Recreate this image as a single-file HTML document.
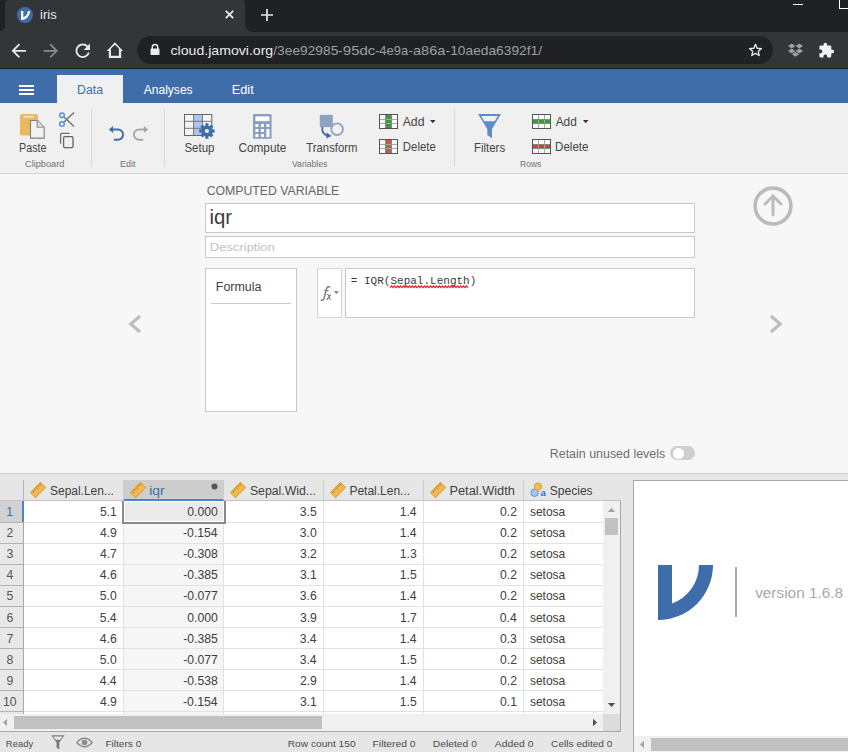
<!DOCTYPE html>
<html><head><meta charset="utf-8">
<style>
*{margin:0;padding:0;box-sizing:border-box}
html,body{width:848px;height:752px;overflow:hidden;background:#e6e6e6;font-family:"Liberation Sans",sans-serif;position:relative}
.a{position:absolute}
.t{position:absolute;white-space:nowrap;line-height:1}
svg{position:absolute;overflow:visible}
</style></head><body>

<!-- ===== Chrome tab strip ===== -->
<div class="a" style="left:0;top:0;width:848px;height:32px;background:#202124"></div>
<div class="a" style="left:5px;top:0;width:240px;height:32px;background:#323639;border-radius:4px 4px 0 0"></div>
<!-- flares -->
<div class="a" style="left:0;top:24px;width:5px;height:8px;background:#323639"></div>
<div class="a" style="left:-3px;top:0;width:8px;height:31px;background:#202124;border-radius:0 0 5px 0"></div>
<div class="a" style="left:245px;top:24px;width:8px;height:8px;background:#323639"></div>
<div class="a" style="left:245px;top:0;width:60px;height:32px;background:#202124;border-radius:0 0 0 8px"></div>
<!-- favicon -->
<svg style="left:17px;top:7px" width="16" height="16" viewBox="0 0 16 16"><circle cx="8" cy="8" r="8" fill="#3e6da9"/><path transform="translate(4 4) scale(0.165)" d="M0 0 H14 V38.5 A41 41 0 0 0 41 0 H55 A55 55 0 0 1 0 55 Z" fill="#fff"/></svg>
<svg style="left:224.6px;top:10.4px" width="9" height="9" viewBox="0 0 9 9"><path d="M0.8 0.8 L8.2 8.2 M8.2 0.8 L0.8 8.2" stroke="#e8eaed" stroke-width="1.8"/></svg>
<svg style="left:261px;top:9px" width="12" height="12" viewBox="0 0 12 12"><path d="M6 0 V12 M0 6 H12" stroke="#e8eaed" stroke-width="1.7"/></svg>
<!-- window controls -->
<div class="a" style="left:793px;top:4px;width:10px;height:1px;background:#fff"></div>
<div class="a" style="left:839px;top:-2px;width:12px;height:11px;border:1px solid #fff"></div>

<!-- ===== Chrome toolbar ===== -->
<div class="a" style="left:0;top:32px;width:848px;height:36px;background:#323639"></div>
<div class="a" style="left:0;top:68px;width:848px;height:1px;background:#202124"></div>
<!-- back -->
<svg style="left:8.25px;top:39.5px" width="23" height="23" viewBox="0 0 24 24"><path transform="scale(0.9375)" d="M20 11H7.83l5.59-5.59L12 4l-8 8 8 8 1.41-1.41L7.83 13H20v-2z" fill="#e8eaed"/></svg>
<svg style="left:40.25px;top:39.5px" width="23" height="23" viewBox="0 0 24 24"><path transform="scale(0.9375)" d="M12 4l-1.41 1.41L16.17 11H4v2h12.17l-5.58 5.59L12 20l8-8z" fill="#8a8b8d"/></svg>
<!-- reload -->
<svg style="left:72.3px;top:39.6px" width="23" height="23" viewBox="0 0 24 24"><path transform="scale(0.9375)" d="M17.65 6.35C16.2 4.9 14.21 4 12 4c-4.42 0-7.99 3.58-7.99 8s3.57 8 7.99 8c3.73 0 6.840-2.55 7.73-6h-2.08c-.82 2.33-3.04 4-5.650 4-3.31 0-6-2.690-6-6s2.690-6 6-6c1.66 0 3.14.69 4.22 1.78L13 11h7V4l-2.35 2.35z" fill="#e8eaed"/></svg>
<!-- home -->
<svg style="left:100px;top:38px" width="28" height="24" viewBox="100 38 28 24"><path fill-rule="evenodd" d="M106.8 50.9 L114.9 42.2 L123 50.9 L121.2 50.9 L121.2 57.9 L108.8 57.9 L108.8 50.9 Z M111 48.4 L114.9 44.8 L118.9 48.4 L118.9 55.7 L111 55.7 Z" fill="#e8eaed"/></svg>
<!-- omnibox -->
<div class="a" style="left:137px;top:36px;width:636px;height:28px;background:#202124;border-radius:14px"></div>
<svg style="left:150px;top:44px" width="10" height="11" viewBox="0 0 10 11"><path d="M2.3 5 V3.3 A2.7 2.7 0 0 1 7.7 3.3 V5" stroke="#e8eaed" stroke-width="1.5" fill="none"/><rect x="0.5" y="4.6" width="9" height="6.4" rx="0.8" fill="#e8eaed"/></svg>
<!-- star -->
<svg style="left:748px;top:43px" width="15" height="14" viewBox="0 0 24 23"><path d="M12 2.2 L14.8 8.6 L21.8 9.2 L16.5 13.8 L18.1 20.6 L12 17 L5.9 20.6 L7.5 13.8 L2.2 9.2 L9.2 8.6 Z" stroke="#e8eaed" stroke-width="2.2" fill="none" stroke-linejoin="round"/></svg>
<!-- dropbox -->
<svg style="left:788px;top:43px" width="15" height="14" viewBox="0 0 15 14"><g fill="#9aa0a6"><path d="M0 3 L3.7 0.5 L7.4 3 L3.7 5.5 Z"/><path d="M7.6 3 L11.3 0.5 L15 3 L11.3 5.5 Z"/><path d="M0 8 L3.7 5.5 L7.4 8 L3.7 10.5 Z"/><path d="M7.6 8 L11.3 5.5 L15 8 L11.3 10.5 Z"/><path d="M3.8 11.2 L7.5 8.7 L11.2 11.2 L7.5 13.7 Z"/></g></svg>
<!-- puzzle -->
<svg style="left:818.2px;top:42.3px" width="24" height="24" viewBox="0 0 24 24"><path transform="scale(0.7)" d="M20.5 11H19V7c0-1.1-.9-2-2-2h-4V3.5C13 2.12 11.88 1 10.5 1S8 2.12 8 3.5V5H4c-1.1 0-1.99.9-1.99 2v3.8H3.5c1.49 0 2.7 1.21 2.7 2.7s-1.21 2.7-2.7 2.7H2V20c0 1.1.9 2 2 2h3.8v-1.5c0-1.49 1.21-2.7 2.7-2.7 1.490 0 2.7 1.21 2.7 2.7V22H17c1.1 0 2-.9 2-2v-4h1.5c1.38 0 2.5-1.12 2.5-2.5S21.88 11 20.5 11z" fill="#f1f3f4"/></svg>

<!-- ===== jamovi header ===== -->
<div class="a" style="left:0;top:69px;width:848px;height:34px;background:#3e6da9"></div>
<div class="a" style="left:19px;top:85px;width:15px;height:2px;background:#fff"></div>
<div class="a" style="left:19px;top:89px;width:15px;height:2px;background:#fff"></div>
<div class="a" style="left:19px;top:93px;width:15px;height:2px;background:#fff"></div>
<div class="a" style="left:57px;top:75px;width:66px;height:28px;background:#f0f0f0"></div>

<!-- ===== Ribbon ===== -->
<div class="a" style="left:0;top:103px;width:848px;height:71px;background:#f0f0f0;border-bottom:1px solid #d4d4d4"></div>
<!-- paste -->
<svg style="left:20px;top:114px" width="26" height="26" viewBox="0 0 26 26"><rect x="0" y="0" width="18" height="21.4" rx="1.6" fill="#e8b862"/><rect x="3.4" y="1.7" width="10.8" height="1.9" fill="#f6e3bd"/><path d="M10.5 6.5 H17.7 L24.2 13.2 V24.1 H10.5 Z" fill="#f2f2f2" stroke="#808080" stroke-width="1.1"/><path d="M17.2 6.5 V13.2 H24.2" fill="#dcdcdc" stroke="#909090" stroke-width="1.1"/></svg>
<!-- scissors -->
<svg style="left:58px;top:111px" width="18" height="17" viewBox="0 0 18 17"><path d="M6 6 L16 15.5 M6 11 L16 1.5" stroke="#707070" stroke-width="1.3"/><circle cx="4" cy="4.3" r="2.3" fill="none" stroke="#5a8fd8" stroke-width="1.5"/><circle cx="4" cy="13" r="2.3" fill="none" stroke="#5a8fd8" stroke-width="1.5"/></svg>
<!-- copy -->
<svg style="left:59px;top:132px" width="16" height="17" viewBox="0 0 16 17"><path d="M1.6 11.8 V2.3 Q1.6 1.4 2.5 1.4 H10.6" fill="none" stroke="#707070" stroke-width="1.3"/><rect x="4.6" y="4.7" width="9.4" height="10.9" rx="1" fill="none" stroke="#666" stroke-width="1.3"/></svg>
<div class="a" style="left:91px;top:109px;width:1px;height:58px;background:#d9d9d9"></div>
<!-- undo/redo -->
<svg style="left:108px;top:125px" width="42" height="17" viewBox="0 0 42 17"><path d="M4.6 4.5 H10 A5.1 5.1 0 0 1 10 14.7 H5.8" fill="none" stroke="#3e6da9" stroke-width="1.9"/><path d="M0.8 4.5 L5.1 1 V8 Z" fill="#3e6da9"/><path d="M36.4 4.5 H31 A5.1 5.1 0 0 0 31 14.7 H35.2" fill="none" stroke="#a8a8a8" stroke-width="1.9"/><path d="M40.2 4.5 L35.9 1 V8 Z" fill="#a8a8a8"/></svg>
<div class="a" style="left:164px;top:109px;width:1px;height:58px;background:#d9d9d9"></div>
<!-- setup -->
<svg style="left:184px;top:114px" width="32" height="26" viewBox="0 0 32 26"><rect x="0.5" y="0.5" width="27.3" height="21" fill="#f5f5f5" stroke="#666" stroke-width="1"/><rect x="9.6" y="1" width="8.8" height="20" fill="#a9c7f0"/><path d="M9.6 0.5 V21.5 M18.4 0.5 V21.5 M0.5 7.3 H27.8 M0.5 14.3 H27.8" stroke="#777" stroke-width="1"/><g transform="translate(22.9 17)" fill="#3e6da9"><circle r="5.5"/><rect x="-1.6" y="-7.7" width="3.2" height="15.4"/><rect x="-1.6" y="-7.7" width="3.2" height="15.4" transform="rotate(45)"/><rect x="-1.6" y="-7.7" width="3.2" height="15.4" transform="rotate(90)"/><rect x="-1.6" y="-7.7" width="3.2" height="15.4" transform="rotate(135)"/><circle r="2.1" fill="#f0f0f0"/></g></svg>
<!-- compute -->
<svg style="left:253px;top:114px" width="19" height="25" viewBox="0 0 19 25"><rect x="0" y="0" width="18.6" height="24.8" rx="1" fill="#8c9fc2"/><rect x="2.4" y="2.4" width="14" height="4.7" fill="#fff"/><g fill="#fff"><rect x="2.4" y="10" width="3" height="3"/><rect x="7.9" y="10" width="3" height="3"/><rect x="13.4" y="10" width="3" height="3"/><rect x="2.4" y="15" width="3" height="3"/><rect x="7.9" y="15" width="3" height="3"/><rect x="13.4" y="15" width="3" height="8"/><rect x="2.4" y="20" width="3" height="3"/><rect x="7.9" y="20" width="3" height="3"/></g></svg>
<!-- transform -->
<svg style="left:319px;top:114px" width="26" height="25" viewBox="0 0 26 25"><rect x="0.8" y="0.9" width="13" height="12.2" fill="#8da2c3"/><circle cx="18.1" cy="15.2" r="5.8" fill="#f0f0f0" stroke="#8da2c3" stroke-width="1.8"/><path d="M3.3 13 Q2.6 20 8.5 21.8" fill="none" stroke="#3e6da9" stroke-width="1.8"/><path d="M7.5 18.5 L12.6 21.9 L7.3 24.6 Z" fill="#3e6da9"/></svg>
<!-- add/delete variables -->
<svg style="left:379px;top:114px" width="20" height="40" viewBox="0 0 20 40"><g transform="translate(0 0)"><rect x="0.5" y="0.5" width="18" height="14" fill="#fafafa"/><rect x="6" y="0" width="7" height="15" fill="#3a9a3e"/><path d="M0.5 5.5 H18.5 M0.5 9.5 H18.5" stroke="#aaa" stroke-width="1"/><path d="M6.5 0.5 V14.5 M12.5 0.5 V14.5" stroke="#888" stroke-width="1"/><rect x="0.5" y="0.5" width="18" height="14" fill="none" stroke="#555" stroke-width="1"/></g><g transform="translate(0 25)"><rect x="0.5" y="0.5" width="18" height="14" fill="#fafafa"/><rect x="6" y="0" width="7" height="15" fill="#c9574b"/><path d="M0.5 5.5 H18.5 M0.5 9.5 H18.5" stroke="#aaa" stroke-width="1"/><path d="M6.5 0.5 V14.5 M12.5 0.5 V14.5" stroke="#888" stroke-width="1"/><rect x="0.5" y="0.5" width="18" height="14" fill="none" stroke="#555" stroke-width="1"/></g></svg>
<svg style="left:430px;top:120px" width="6" height="4" viewBox="0 0 6 4"><path d="M0 0 H5.5 L2.75 3.2 Z" fill="#333"/></svg>
<div class="a" style="left:454px;top:109px;width:1px;height:58px;background:#d9d9d9"></div>
<!-- filters -->
<svg style="left:478px;top:114px" width="24" height="25" viewBox="0 0 24 25"><path d="M0 0 H23 L14 15 V24.3 L9.3 21 V15 Z" fill="#5e8bc9"/><path d="M3.2 2 H19.8 L16.8 7.2 H6.2 Z" fill="#f0f0f0"/></svg>
<!-- add/delete rows -->
<svg style="left:532px;top:114px" width="20" height="40" viewBox="0 0 20 40"><g transform="translate(0 0)"><rect x="0.5" y="0.5" width="18" height="14" fill="#fafafa"/><rect x="0" y="5" width="19" height="5" fill="#3a9a3e"/><path d="M6.5 0.5 V14.5 M12.5 0.5 V14.5" stroke="#aaa" stroke-width="1"/><path d="M0.5 5.5 H18.5 M0.5 9.5 H18.5" stroke="#888" stroke-width="1"/><rect x="0.5" y="0.5" width="18" height="14" fill="none" stroke="#555" stroke-width="1"/></g><g transform="translate(0 25)"><rect x="0.5" y="0.5" width="18" height="14" fill="#fafafa"/><rect x="0" y="5" width="19" height="5" fill="#d83b3b"/><path d="M6.5 0.5 V14.5 M12.5 0.5 V14.5" stroke="#aaa" stroke-width="1"/><path d="M0.5 5.5 H18.5 M0.5 9.5 H18.5" stroke="#888" stroke-width="1"/><rect x="0.5" y="0.5" width="18" height="14" fill="none" stroke="#555" stroke-width="1"/></g></svg>
<svg style="left:583px;top:120px" width="6" height="4" viewBox="0 0 6 4"><path d="M0 0 H5.5 L2.75 3.2 Z" fill="#333"/></svg>

<!-- ===== Content ===== -->
<div class="a" style="left:0;top:174px;width:848px;height:300px;background:#f7f7f7;border-bottom:1px solid #cfcfcf"></div>
<div class="a" style="left:205px;top:203px;width:490px;height:30px;background:#fff;border:1px solid #c8c8c8"></div>
<div class="a" style="left:205px;top:236px;width:490px;height:22px;background:#fff;border:1px solid #c8c8c8"></div>
<!-- formula list -->
<div class="a" style="left:205px;top:268px;width:92px;height:144px;background:#fff;border:1px solid #c8c8c8"></div>
<div class="a" style="left:211px;top:303px;width:80px;height:1px;background:#c8c8c8"></div>
<!-- fx -->
<div class="a" style="left:317px;top:268px;width:25px;height:50px;background:#fff;border:1px solid #d4d4d4"></div>
<svg style="left:314px;top:276px" width="32" height="34" viewBox="314 276 32 34"><path d="M321.3 300.2 Q323.2 300.8 324 298.5 L326.6 288.6 Q327.3 286.4 329.6 286.9" fill="none" stroke="#7a7a7a" stroke-width="1.5" stroke-linecap="round"/><path d="M324.4 290.6 H328.6" stroke="#7a7a7a" stroke-width="1.2"/><path d="M327 294.6 Q328.6 294 329.2 297 Q329.8 299.8 330.9 299.4 M330.8 294.6 L326.6 299.8" fill="none" stroke="#7a7a7a" stroke-width="1.1"/><path d="M333.9 291.2 H338.9 L336.4 294 Z" fill="#777"/></svg>
<div class="a" style="left:345px;top:268px;width:350px;height:50px;background:#fff;border:1px solid #c8c8c8"></div>
<svg style="left:389.5px;top:284.5px" width="80" height="4" viewBox="0 0 80 4"><path d="M0 2.6 L0.0 2.6 L1.5 0.8 L3.0 2.6 L4.5 0.8 L6.0 2.6 L7.5 0.8 L9.0 2.6 L10.5 0.8 L12.0 2.6 L13.5 0.8 L15.0 2.6 L16.5 0.8 L18.0 2.6 L19.5 0.8 L21.0 2.6 L22.5 0.8 L24.0 2.6 L25.5 0.8 L27.0 2.6 L28.5 0.8 L30.0 2.6 L31.5 0.8 L33.0 2.6 L34.5 0.8 L36.0 2.6 L37.5 0.8 L39.0 2.6 L40.5 0.8 L42.0 2.6 L43.5 0.8 L45.0 2.6 L46.5 0.8 L48.0 2.6 L49.5 0.8 L51.0 2.6 L52.5 0.8 L54.0 2.6 L55.5 0.8 L57.0 2.6 L58.5 0.8 L60.0 2.6 L61.5 0.8 L63.0 2.6 L64.5 0.8 L66.0 2.6 L67.5 0.8 L69.0 2.6 L70.5 0.8 L72.0 2.6 L73.5 0.8 L75.0 2.6 L76.5 0.8 L78.0 2.6" fill="none" stroke="#e02020" stroke-width="1.15"/></svg>
<!-- up circle -->
<svg style="left:753px;top:186px" width="40" height="40" viewBox="0 0 40 40"><circle cx="20" cy="20" r="17.9" fill="none" stroke="#bbb" stroke-width="3.6"/><path d="M20 9.8 V29 M12 18 L20 10 L28 18" fill="none" stroke="#bbb" stroke-width="2.9" stroke-linecap="round" stroke-linejoin="round"/></svg>
<!-- chevrons -->
<svg style="left:126.5px;top:313px" width="16" height="22" viewBox="0 0 16 22"><path d="M13 3 L3.8 11 L13 19" fill="none" stroke="#bdbdbd" stroke-width="3.2"/></svg>
<svg style="left:767px;top:313px" width="16" height="22" viewBox="0 0 16 22"><path d="M4 3 L13.2 11 L4 19" fill="none" stroke="#bdbdbd" stroke-width="3.2"/></svg>
<!-- retain -->
<div class="a" style="left:670px;top:446px;width:25px;height:14px;background:#cfcfcf;border-radius:7px"></div>
<div class="a" style="left:672.5px;top:447.5px;width:11px;height:11px;background:#fff;border-radius:50%"></div>

<!-- ===== table ===== -->
<div class="a" style="left:0;top:500px;width:621px;height:232px;background:#fff;border-top:1px solid #c4c4c4;border-right:1px solid #a8a8a8;border-bottom:1px solid #a8a8a8"></div>
<div class="a" style="left:124px;top:501px;width:99px;height:213px;background:#f6f6f6"></div>
<div class="a" style="left:0;top:501px;width:23px;height:213px;background:#e8e8e8"></div>
<div class="a" style="left:0;top:501px;width:22px;height:21px;background:#d2d2d2"></div>
<div class="a" style="left:23px;top:501px;width:1px;height:213px;background:#a9a9a9"></div>
<div class="a" style="left:22px;top:501px;width:2px;height:21px;background:#4a86d0"></div>
<div class="a" style="left:123px;top:501px;width:1px;height:213px;background:#e2e2e2"></div>
<div class="a" style="left:223px;top:501px;width:1px;height:213px;background:#e2e2e2"></div>
<div class="a" style="left:323px;top:501px;width:1px;height:213px;background:#e2e2e2"></div>
<div class="a" style="left:423px;top:501px;width:1px;height:213px;background:#e2e2e2"></div>
<div class="a" style="left:523px;top:501px;width:1px;height:213px;background:#e2e2e2"></div>
<div class="a" style="left:24px;top:522px;width:579px;height:1px;background:#e2e2e2"></div>
<div class="a" style="left:0;top:522px;width:23px;height:1px;background:#b4b4b4"></div>
<div class="a" style="left:24px;top:543px;width:579px;height:1px;background:#e2e2e2"></div>
<div class="a" style="left:0;top:543px;width:23px;height:1px;background:#b4b4b4"></div>
<div class="a" style="left:24px;top:564px;width:579px;height:1px;background:#e2e2e2"></div>
<div class="a" style="left:0;top:564px;width:23px;height:1px;background:#b4b4b4"></div>
<div class="a" style="left:24px;top:585px;width:579px;height:1px;background:#e2e2e2"></div>
<div class="a" style="left:0;top:585px;width:23px;height:1px;background:#b4b4b4"></div>
<div class="a" style="left:24px;top:606px;width:579px;height:1px;background:#e2e2e2"></div>
<div class="a" style="left:0;top:606px;width:23px;height:1px;background:#b4b4b4"></div>
<div class="a" style="left:24px;top:627px;width:579px;height:1px;background:#e2e2e2"></div>
<div class="a" style="left:0;top:627px;width:23px;height:1px;background:#b4b4b4"></div>
<div class="a" style="left:24px;top:648px;width:579px;height:1px;background:#e2e2e2"></div>
<div class="a" style="left:0;top:648px;width:23px;height:1px;background:#b4b4b4"></div>
<div class="a" style="left:24px;top:669px;width:579px;height:1px;background:#e2e2e2"></div>
<div class="a" style="left:0;top:669px;width:23px;height:1px;background:#b4b4b4"></div>
<div class="a" style="left:24px;top:690px;width:579px;height:1px;background:#e2e2e2"></div>
<div class="a" style="left:0;top:690px;width:23px;height:1px;background:#b4b4b4"></div>
<div class="a" style="left:24px;top:711px;width:579px;height:1px;background:#e2e2e2"></div>
<div class="a" style="left:0;top:711px;width:23px;height:1px;background:#b4b4b4"></div>
<div class="a" style="left:122px;top:501px;width:104px;height:23px;border:2px solid #8a8a8a;border-top:0;background:#ebebeb;box-shadow:inset 0 0 0 1px #fff"></div>
<div class="a" style="left:603px;top:501px;width:17px;height:213px;background:#f0f0f0"></div>
<svg style="left:607px;top:507px" width="9" height="6" viewBox="0 0 9 6"><path d="M0.8 5 L4.5 1 L8.2 5 Z" fill="#a3a3a3"/></svg>
<div class="a" style="left:605px;top:518px;width:13px;height:17px;background:#c1c1c1"></div>
<svg style="left:607px;top:702px" width="9" height="6" viewBox="0 0 9 6"><path d="M0.8 1 L4.5 5 L8.2 1 Z" fill="#505050"/></svg>
<div class="a" style="left:0;top:714px;width:603px;height:17px;background:#f0f0f0"></div>
<div class="a" style="left:603px;top:714px;width:17px;height:17px;background:#dcdcdc"></div>
<svg style="left:2px;top:718px" width="6" height="9" viewBox="0 0 6 9"><path d="M5 0.8 L1 4.5 L5 8.2 Z" fill="#a3a3a3"/></svg>
<div class="a" style="left:14px;top:716px;width:308px;height:13px;background:#c1c1c1"></div>
<svg style="left:592px;top:718px" width="6" height="9" viewBox="0 0 6 9"><path d="M1 0.8 L5 4.5 L1 8.2 Z" fill="#505050"/></svg>
<div class="a" style="left:23px;top:480px;width:1px;height:20px;background:#b8b8b8"></div>
<div class="a" style="left:124px;top:480px;width:100px;height:20px;background:#cdcdcd"></div>
<div class="a" style="left:124px;top:499px;width:100px;height:2px;background:#4a86d0"></div>
<div class="a" style="left:123px;top:480px;width:1px;height:20px;background:#cbcbcb"></div>
<div class="a" style="left:223px;top:480px;width:1px;height:20px;background:#cbcbcb"></div>
<div class="a" style="left:323px;top:480px;width:1px;height:20px;background:#cbcbcb"></div>
<div class="a" style="left:423px;top:480px;width:1px;height:20px;background:#cbcbcb"></div>
<div class="a" style="left:523px;top:480px;width:1px;height:20px;background:#cbcbcb"></div>
<svg style="left:30px;top:482px" width="16" height="16" viewBox="0 0 16 16"><g transform="rotate(-45 8 8)"><rect x="1" y="4.5" width="14" height="7" fill="#f0b955" stroke="#e2a233" stroke-width="1"/><path d="M3.5 4.5 V7.3 M6 4.5 V6.5 M8.5 4.5 V7.3 M11 4.5 V6.5 M13.5 4.5 V7.3" stroke="#c98a1e" stroke-width="1"/></g></svg>
<svg style="left:130px;top:482px" width="16" height="16" viewBox="0 0 16 16"><g transform="rotate(-45 8 8)"><rect x="1" y="4.5" width="14" height="7" fill="#f0b955" stroke="#e2a233" stroke-width="1"/><path d="M3.5 4.5 V7.3 M6 4.5 V6.5 M8.5 4.5 V7.3 M11 4.5 V6.5 M13.5 4.5 V7.3" stroke="#c98a1e" stroke-width="1"/></g></svg>
<svg style="left:230px;top:482px" width="16" height="16" viewBox="0 0 16 16"><g transform="rotate(-45 8 8)"><rect x="1" y="4.5" width="14" height="7" fill="#f0b955" stroke="#e2a233" stroke-width="1"/><path d="M3.5 4.5 V7.3 M6 4.5 V6.5 M8.5 4.5 V7.3 M11 4.5 V6.5 M13.5 4.5 V7.3" stroke="#c98a1e" stroke-width="1"/></g></svg>
<svg style="left:330px;top:482px" width="16" height="16" viewBox="0 0 16 16"><g transform="rotate(-45 8 8)"><rect x="1" y="4.5" width="14" height="7" fill="#f0b955" stroke="#e2a233" stroke-width="1"/><path d="M3.5 4.5 V7.3 M6 4.5 V6.5 M8.5 4.5 V7.3 M11 4.5 V6.5 M13.5 4.5 V7.3" stroke="#c98a1e" stroke-width="1"/></g></svg>
<svg style="left:430px;top:482px" width="16" height="16" viewBox="0 0 16 16"><g transform="rotate(-45 8 8)"><rect x="1" y="4.5" width="14" height="7" fill="#f0b955" stroke="#e2a233" stroke-width="1"/><path d="M3.5 4.5 V7.3 M6 4.5 V6.5 M8.5 4.5 V7.3 M11 4.5 V6.5 M13.5 4.5 V7.3" stroke="#c98a1e" stroke-width="1"/></g></svg>
<svg style="left:211px;top:483px" width="7" height="7" viewBox="0 0 7 7"><circle cx="3.5" cy="3.5" r="3" fill="#555"/></svg>
<svg style="left:530px;top:481px" width="17" height="17" viewBox="0 0 17 17"><circle cx="4.6" cy="11.7" r="3.7" fill="#a9c7f0" stroke="#5a8fd8" stroke-width="1"/><circle cx="8" cy="5.7" r="3.7" fill="#f0bd5e" stroke="#e0a030" stroke-width="1"/><text x="10.4" y="15.1" font-family="Liberation Sans" font-weight="bold" font-size="9.6" fill="#2f6fd0">a</text></svg>
<!-- ===== results ===== -->
<div class="a" style="left:633px;top:480px;width:220px;height:280px;background:#fff;border:1px solid #a8a8a8"></div>
<div class="a" style="left:634px;top:736px;width:214px;height:16px;background:#f1f1f1"></div>
<svg style="left:639px;top:740px" width="6" height="9" viewBox="0 0 6 9"><path d="M5 0.8 L1 4.5 L5 8.2 Z" fill="#a3a3a3"/></svg>
<div class="a" style="left:651px;top:738px;width:197px;height:13px;background:#c1c1c1"></div>
<svg style="left:658px;top:565px" width="56" height="56" viewBox="658 565 56 56"><path d="M658 565 H672 V603.5 A41 41 0 0 0 699 565 H713 A55 55 0 0 1 658 620 Z" fill="#3e6da9"/></svg>
<div class="a" style="left:735px;top:567px;width:2px;height:50px;background:#aaa"></div>
<!-- ===== status ===== -->
<svg style="left:51px;top:735px" width="14" height="15" viewBox="0 0 14 15"><path d="M0.3 0.3 H13.5 L8.3 7.5 V14.6 L5.5 12.6 V7.5 Z" fill="#7a7a7a"/><path d="M2.3 1.6 H11.5 L9.2 4.8 H4.6 Z" fill="#e6e6e6"/></svg>
<svg style="left:76px;top:737px" width="17" height="11" viewBox="0 0 17 11"><path d="M0.8 5.5 Q8.5 -3 16.2 5.5 Q8.5 14 0.8 5.5 Z" fill="none" stroke="#8a8a8a" stroke-width="1.3"/><circle cx="8.5" cy="5.5" r="2.8" fill="#8a8a8a"/></svg>
<svg style="left:0;top:0" width="848" height="752" viewBox="0 0 848 752">
<text x="40.14" y="19.00" font-size="12" font-family="Liberation Sans" fill="#e8eaed" textLength="16.52" lengthAdjust="spacingAndGlyphs">iris</text>
<text x="170.50" y="54.60" font-size="13" font-family="Liberation Sans" fill="#e8eaed" textLength="102.72" lengthAdjust="spacingAndGlyphs">cloud.jamovi.org</text>
<text x="273.30" y="54.60" font-size="13" font-family="Liberation Sans" fill="#9aa0a6" textLength="64.98" lengthAdjust="spacingAndGlyphs">/3ee92985</text>
<text x="337.87" y="54.60" font-size="13" font-family="Liberation Sans" fill="#9aa0a6" textLength="37.35" lengthAdjust="spacingAndGlyphs">-95dc</text>
<text x="375.05" y="54.60" font-size="13" font-family="Liberation Sans" fill="#9aa0a6" textLength="33.15" lengthAdjust="spacingAndGlyphs">-4e9a</text>
<text x="408.18" y="54.60" font-size="13" font-family="Liberation Sans" fill="#9aa0a6" textLength="37.21" lengthAdjust="spacingAndGlyphs">-a86a</text>
<text x="445.62" y="54.60" font-size="13" font-family="Liberation Sans" fill="#9aa0a6" textLength="96.41" lengthAdjust="spacingAndGlyphs">-10aeda6392f1/</text>
<text x="77.08" y="93.80" font-size="12" font-family="Liberation Sans" fill="#3e6da9" textLength="25.87" lengthAdjust="spacingAndGlyphs">Data</text>
<text x="143.70" y="93.80" font-size="12" font-family="Liberation Sans" fill="#ffffff" textLength="48.95" lengthAdjust="spacingAndGlyphs">Analyses</text>
<text x="231.73" y="93.80" font-size="12" font-family="Liberation Sans" fill="#ffffff" textLength="22.05" lengthAdjust="spacingAndGlyphs">Edit</text>
<text x="19.12" y="151.70" font-size="12.2" font-family="Liberation Sans" fill="#444444" textLength="27.36" lengthAdjust="spacingAndGlyphs">Paste</text>
<text x="184.48" y="151.70" font-size="12.2" font-family="Liberation Sans" fill="#444444" textLength="29.97" lengthAdjust="spacingAndGlyphs">Setup</text>
<text x="238.42" y="151.70" font-size="12.2" font-family="Liberation Sans" fill="#444444" textLength="47.92" lengthAdjust="spacingAndGlyphs">Compute</text>
<text x="306.37" y="151.70" font-size="12.2" font-family="Liberation Sans" fill="#444444" textLength="51.00" lengthAdjust="spacingAndGlyphs">Transform</text>
<text x="474.06" y="151.70" font-size="12.2" font-family="Liberation Sans" fill="#444444" textLength="31.07" lengthAdjust="spacingAndGlyphs">Filters</text>
<text x="402.75" y="125.80" font-size="12.2" font-family="Liberation Sans" fill="#444444" textLength="21.66" lengthAdjust="spacingAndGlyphs">Add</text>
<text x="402.87" y="151.00" font-size="12.2" font-family="Liberation Sans" fill="#444444" textLength="32.91" lengthAdjust="spacingAndGlyphs">Delete</text>
<text x="555.65" y="125.80" font-size="12.2" font-family="Liberation Sans" fill="#444444" textLength="21.14" lengthAdjust="spacingAndGlyphs">Add</text>
<text x="555.05" y="151.00" font-size="12.2" font-family="Liberation Sans" fill="#444444" textLength="33.44" lengthAdjust="spacingAndGlyphs">Delete</text>
<text x="25.03" y="167.10" font-size="9.7" font-family="Liberation Sans" fill="#707070" textLength="39.36" lengthAdjust="spacingAndGlyphs">Clipboard</text>
<text x="120.06" y="167.10" font-size="9.7" font-family="Liberation Sans" fill="#707070" textLength="15.50" lengthAdjust="spacingAndGlyphs">Edit</text>
<text x="291.96" y="167.10" font-size="9.7" font-family="Liberation Sans" fill="#707070" textLength="35.37" lengthAdjust="spacingAndGlyphs">Variables</text>
<text x="520.10" y="167.10" font-size="9.7" font-family="Liberation Sans" fill="#707070" textLength="21.21" lengthAdjust="spacingAndGlyphs">Rows</text>
<text x="206.68" y="194.80" font-size="12.9" font-family="Liberation Sans" fill="#666666" textLength="132.63" lengthAdjust="spacingAndGlyphs">COMPUTED VARIABLE</text>
<text x="209.43" y="223.90" font-size="19.3" font-family="Liberation Sans" fill="#3a3a3a" textLength="22.64" lengthAdjust="spacingAndGlyphs">iqr</text>
<text x="209.83" y="251.40" font-size="11.5" font-family="Liberation Sans" fill="#c2c2c2" textLength="64.99" lengthAdjust="spacingAndGlyphs">Description</text>
<text x="215.81" y="291.00" font-size="12.5" font-family="Liberation Sans" fill="#404040" textLength="45.59" lengthAdjust="spacingAndGlyphs">Formula</text>
<text x="350.79" y="284.30" font-size="10.8" font-family="Liberation Mono" fill="#3a3a3a" textLength="125.54" lengthAdjust="spacingAndGlyphs">= IQR(Sepal.Length)</text>
<text x="549.76" y="457.80" font-size="12" font-family="Liberation Sans" fill="#6e6e6e" textLength="115.41" lengthAdjust="spacingAndGlyphs">Retain unused levels</text>
<text x="50.05" y="495.00" font-size="12" font-family="Liberation Sans" fill="#404040" textLength="63.75" lengthAdjust="spacingAndGlyphs">Sepal.Len...</text>
<text x="149.28" y="495.00" font-size="12" font-family="Liberation Sans" fill="#3e6da9" textLength="15.33" lengthAdjust="spacingAndGlyphs">iqr</text>
<text x="249.94" y="495.00" font-size="12" font-family="Liberation Sans" fill="#404040" textLength="66.08" lengthAdjust="spacingAndGlyphs">Sepal.Wid...</text>
<text x="349.40" y="495.00" font-size="12" font-family="Liberation Sans" fill="#404040" textLength="60.66" lengthAdjust="spacingAndGlyphs">Petal.Len...</text>
<text x="449.43" y="495.00" font-size="12" font-family="Liberation Sans" fill="#404040" textLength="65.48" lengthAdjust="spacingAndGlyphs">Petal.Width</text>
<text x="549.85" y="495.00" font-size="12" font-family="Liberation Sans" fill="#404040" textLength="42.80" lengthAdjust="spacingAndGlyphs">Species</text>
<text x="99.90" y="516.00" font-size="12.2" font-family="Liberation Sans" fill="#404040" textLength="16.96" lengthAdjust="spacingAndGlyphs">5.1</text>
<text x="187.25" y="516.00" font-size="12.2" font-family="Liberation Sans" fill="#404040" textLength="30.53" lengthAdjust="spacingAndGlyphs">0.000</text>
<text x="299.80" y="516.00" font-size="12.2" font-family="Liberation Sans" fill="#404040" textLength="16.96" lengthAdjust="spacingAndGlyphs">3.5</text>
<text x="399.65" y="516.00" font-size="12.2" font-family="Liberation Sans" fill="#404040" textLength="16.96" lengthAdjust="spacingAndGlyphs">1.4</text>
<text x="500.00" y="516.00" font-size="12.2" font-family="Liberation Sans" fill="#404040" textLength="16.96" lengthAdjust="spacingAndGlyphs">0.2</text>
<text x="529.96" y="516.00" font-size="12.2" font-family="Liberation Sans" fill="#404040" textLength="35.34" lengthAdjust="spacingAndGlyphs">setosa</text>
<text x="6.35" y="516.00" font-size="12.2" font-family="Liberation Sans" fill="#3e6da9" textLength="6.79" lengthAdjust="spacingAndGlyphs">1</text>
<text x="99.90" y="537.10" font-size="12.2" font-family="Liberation Sans" fill="#404040" textLength="16.96" lengthAdjust="spacingAndGlyphs">4.9</text>
<text x="183.05" y="537.10" font-size="12.2" font-family="Liberation Sans" fill="#404040" textLength="34.59" lengthAdjust="spacingAndGlyphs">-0.154</text>
<text x="299.80" y="537.10" font-size="12.2" font-family="Liberation Sans" fill="#404040" textLength="16.96" lengthAdjust="spacingAndGlyphs">3.0</text>
<text x="399.65" y="537.10" font-size="12.2" font-family="Liberation Sans" fill="#404040" textLength="16.96" lengthAdjust="spacingAndGlyphs">1.4</text>
<text x="500.00" y="537.10" font-size="12.2" font-family="Liberation Sans" fill="#404040" textLength="16.96" lengthAdjust="spacingAndGlyphs">0.2</text>
<text x="529.96" y="537.10" font-size="12.2" font-family="Liberation Sans" fill="#404040" textLength="35.34" lengthAdjust="spacingAndGlyphs">setosa</text>
<text x="6.50" y="537.10" font-size="12.2" font-family="Liberation Sans" fill="#555555" textLength="6.79" lengthAdjust="spacingAndGlyphs">2</text>
<text x="99.90" y="558.20" font-size="12.2" font-family="Liberation Sans" fill="#404040" textLength="16.96" lengthAdjust="spacingAndGlyphs">4.7</text>
<text x="183.25" y="558.20" font-size="12.2" font-family="Liberation Sans" fill="#404040" textLength="34.59" lengthAdjust="spacingAndGlyphs">-0.308</text>
<text x="299.90" y="558.20" font-size="12.2" font-family="Liberation Sans" fill="#404040" textLength="16.96" lengthAdjust="spacingAndGlyphs">3.2</text>
<text x="399.85" y="558.20" font-size="12.2" font-family="Liberation Sans" fill="#404040" textLength="16.96" lengthAdjust="spacingAndGlyphs">1.3</text>
<text x="500.00" y="558.20" font-size="12.2" font-family="Liberation Sans" fill="#404040" textLength="16.96" lengthAdjust="spacingAndGlyphs">0.2</text>
<text x="529.96" y="558.20" font-size="12.2" font-family="Liberation Sans" fill="#404040" textLength="35.34" lengthAdjust="spacingAndGlyphs">setosa</text>
<text x="6.55" y="558.20" font-size="12.2" font-family="Liberation Sans" fill="#555555" textLength="6.79" lengthAdjust="spacingAndGlyphs">3</text>
<text x="99.85" y="579.30" font-size="12.2" font-family="Liberation Sans" fill="#404040" textLength="16.96" lengthAdjust="spacingAndGlyphs">4.6</text>
<text x="183.20" y="579.30" font-size="12.2" font-family="Liberation Sans" fill="#404040" textLength="34.59" lengthAdjust="spacingAndGlyphs">-0.385</text>
<text x="299.90" y="579.30" font-size="12.2" font-family="Liberation Sans" fill="#404040" textLength="16.96" lengthAdjust="spacingAndGlyphs">3.1</text>
<text x="399.80" y="579.30" font-size="12.2" font-family="Liberation Sans" fill="#404040" textLength="16.96" lengthAdjust="spacingAndGlyphs">1.5</text>
<text x="500.00" y="579.30" font-size="12.2" font-family="Liberation Sans" fill="#404040" textLength="16.96" lengthAdjust="spacingAndGlyphs">0.2</text>
<text x="529.96" y="579.30" font-size="12.2" font-family="Liberation Sans" fill="#404040" textLength="35.34" lengthAdjust="spacingAndGlyphs">setosa</text>
<text x="6.55" y="579.30" font-size="12.2" font-family="Liberation Sans" fill="#555555" textLength="6.79" lengthAdjust="spacingAndGlyphs">4</text>
<text x="99.80" y="600.40" font-size="12.2" font-family="Liberation Sans" fill="#404040" textLength="16.96" lengthAdjust="spacingAndGlyphs">5.0</text>
<text x="183.30" y="600.40" font-size="12.2" font-family="Liberation Sans" fill="#404040" textLength="34.59" lengthAdjust="spacingAndGlyphs">-0.077</text>
<text x="299.85" y="600.40" font-size="12.2" font-family="Liberation Sans" fill="#404040" textLength="16.96" lengthAdjust="spacingAndGlyphs">3.6</text>
<text x="399.65" y="600.40" font-size="12.2" font-family="Liberation Sans" fill="#404040" textLength="16.96" lengthAdjust="spacingAndGlyphs">1.4</text>
<text x="500.00" y="600.40" font-size="12.2" font-family="Liberation Sans" fill="#404040" textLength="16.96" lengthAdjust="spacingAndGlyphs">0.2</text>
<text x="529.96" y="600.40" font-size="12.2" font-family="Liberation Sans" fill="#404040" textLength="35.34" lengthAdjust="spacingAndGlyphs">setosa</text>
<text x="6.50" y="600.40" font-size="12.2" font-family="Liberation Sans" fill="#555555" textLength="6.79" lengthAdjust="spacingAndGlyphs">5</text>
<text x="99.65" y="621.50" font-size="12.2" font-family="Liberation Sans" fill="#404040" textLength="16.96" lengthAdjust="spacingAndGlyphs">5.4</text>
<text x="187.25" y="621.50" font-size="12.2" font-family="Liberation Sans" fill="#404040" textLength="30.53" lengthAdjust="spacingAndGlyphs">0.000</text>
<text x="299.90" y="621.50" font-size="12.2" font-family="Liberation Sans" fill="#404040" textLength="16.96" lengthAdjust="spacingAndGlyphs">3.9</text>
<text x="399.90" y="621.50" font-size="12.2" font-family="Liberation Sans" fill="#404040" textLength="16.96" lengthAdjust="spacingAndGlyphs">1.7</text>
<text x="499.75" y="621.50" font-size="12.2" font-family="Liberation Sans" fill="#404040" textLength="16.96" lengthAdjust="spacingAndGlyphs">0.4</text>
<text x="529.96" y="621.50" font-size="12.2" font-family="Liberation Sans" fill="#404040" textLength="35.34" lengthAdjust="spacingAndGlyphs">setosa</text>
<text x="6.47" y="621.50" font-size="12.2" font-family="Liberation Sans" fill="#555555" textLength="6.79" lengthAdjust="spacingAndGlyphs">6</text>
<text x="99.85" y="642.60" font-size="12.2" font-family="Liberation Sans" fill="#404040" textLength="16.96" lengthAdjust="spacingAndGlyphs">4.6</text>
<text x="183.20" y="642.60" font-size="12.2" font-family="Liberation Sans" fill="#404040" textLength="34.59" lengthAdjust="spacingAndGlyphs">-0.385</text>
<text x="299.65" y="642.60" font-size="12.2" font-family="Liberation Sans" fill="#404040" textLength="16.96" lengthAdjust="spacingAndGlyphs">3.4</text>
<text x="399.65" y="642.60" font-size="12.2" font-family="Liberation Sans" fill="#404040" textLength="16.96" lengthAdjust="spacingAndGlyphs">1.4</text>
<text x="499.95" y="642.60" font-size="12.2" font-family="Liberation Sans" fill="#404040" textLength="16.96" lengthAdjust="spacingAndGlyphs">0.3</text>
<text x="529.96" y="642.60" font-size="12.2" font-family="Liberation Sans" fill="#404040" textLength="35.34" lengthAdjust="spacingAndGlyphs">setosa</text>
<text x="6.50" y="642.60" font-size="12.2" font-family="Liberation Sans" fill="#555555" textLength="6.79" lengthAdjust="spacingAndGlyphs">7</text>
<text x="99.80" y="663.70" font-size="12.2" font-family="Liberation Sans" fill="#404040" textLength="16.96" lengthAdjust="spacingAndGlyphs">5.0</text>
<text x="183.30" y="663.70" font-size="12.2" font-family="Liberation Sans" fill="#404040" textLength="34.59" lengthAdjust="spacingAndGlyphs">-0.077</text>
<text x="299.65" y="663.70" font-size="12.2" font-family="Liberation Sans" fill="#404040" textLength="16.96" lengthAdjust="spacingAndGlyphs">3.4</text>
<text x="399.80" y="663.70" font-size="12.2" font-family="Liberation Sans" fill="#404040" textLength="16.96" lengthAdjust="spacingAndGlyphs">1.5</text>
<text x="500.00" y="663.70" font-size="12.2" font-family="Liberation Sans" fill="#404040" textLength="16.96" lengthAdjust="spacingAndGlyphs">0.2</text>
<text x="529.96" y="663.70" font-size="12.2" font-family="Liberation Sans" fill="#404040" textLength="35.34" lengthAdjust="spacingAndGlyphs">setosa</text>
<text x="6.53" y="663.70" font-size="12.2" font-family="Liberation Sans" fill="#555555" textLength="6.79" lengthAdjust="spacingAndGlyphs">8</text>
<text x="99.65" y="684.80" font-size="12.2" font-family="Liberation Sans" fill="#404040" textLength="16.96" lengthAdjust="spacingAndGlyphs">4.4</text>
<text x="183.25" y="684.80" font-size="12.2" font-family="Liberation Sans" fill="#404040" textLength="34.59" lengthAdjust="spacingAndGlyphs">-0.538</text>
<text x="299.90" y="684.80" font-size="12.2" font-family="Liberation Sans" fill="#404040" textLength="16.96" lengthAdjust="spacingAndGlyphs">2.9</text>
<text x="399.65" y="684.80" font-size="12.2" font-family="Liberation Sans" fill="#404040" textLength="16.96" lengthAdjust="spacingAndGlyphs">1.4</text>
<text x="500.00" y="684.80" font-size="12.2" font-family="Liberation Sans" fill="#404040" textLength="16.96" lengthAdjust="spacingAndGlyphs">0.2</text>
<text x="529.96" y="684.80" font-size="12.2" font-family="Liberation Sans" fill="#404040" textLength="35.34" lengthAdjust="spacingAndGlyphs">setosa</text>
<text x="6.53" y="684.80" font-size="12.2" font-family="Liberation Sans" fill="#555555" textLength="6.79" lengthAdjust="spacingAndGlyphs">9</text>
<text x="99.90" y="705.90" font-size="12.2" font-family="Liberation Sans" fill="#404040" textLength="16.96" lengthAdjust="spacingAndGlyphs">4.9</text>
<text x="183.05" y="705.90" font-size="12.2" font-family="Liberation Sans" fill="#404040" textLength="34.59" lengthAdjust="spacingAndGlyphs">-0.154</text>
<text x="299.90" y="705.90" font-size="12.2" font-family="Liberation Sans" fill="#404040" textLength="16.96" lengthAdjust="spacingAndGlyphs">3.1</text>
<text x="399.80" y="705.90" font-size="12.2" font-family="Liberation Sans" fill="#404040" textLength="16.96" lengthAdjust="spacingAndGlyphs">1.5</text>
<text x="500.00" y="705.90" font-size="12.2" font-family="Liberation Sans" fill="#404040" textLength="16.96" lengthAdjust="spacingAndGlyphs">0.1</text>
<text x="529.96" y="705.90" font-size="12.2" font-family="Liberation Sans" fill="#404040" textLength="35.34" lengthAdjust="spacingAndGlyphs">setosa</text>
<text x="2.90" y="705.90" font-size="12.2" font-family="Liberation Sans" fill="#555555" textLength="13.57" lengthAdjust="spacingAndGlyphs">10</text>
<text x="755.15" y="597.90" font-size="15" font-family="Liberation Sans" fill="#a9a9a9" textLength="88.00" lengthAdjust="spacingAndGlyphs">version 1.6.8</text>
<text x="5.86" y="747.00" font-size="9.5" font-family="Liberation Sans" fill="#4a4a4a" textLength="27.26" lengthAdjust="spacingAndGlyphs">Ready</text>
<text x="105.40" y="747.00" font-size="9.5" font-family="Liberation Sans" fill="#4a4a4a" textLength="35.90" lengthAdjust="spacingAndGlyphs">Filters 0</text>
<text x="287.70" y="747.00" font-size="9.5" font-family="Liberation Sans" fill="#4a4a4a" textLength="67.90" lengthAdjust="spacingAndGlyphs">Row count 150</text>
<text x="372.59" y="747.00" font-size="9.5" font-family="Liberation Sans" fill="#4a4a4a" textLength="42.85" lengthAdjust="spacingAndGlyphs">Filtered 0</text>
<text x="432.79" y="747.00" font-size="9.5" font-family="Liberation Sans" fill="#4a4a4a" textLength="44.11" lengthAdjust="spacingAndGlyphs">Deleted 0</text>
<text x="494.80" y="747.00" font-size="9.5" font-family="Liberation Sans" fill="#4a4a4a" textLength="38.63" lengthAdjust="spacingAndGlyphs">Added 0</text>
<text x="551.12" y="747.00" font-size="9.5" font-family="Liberation Sans" fill="#4a4a4a" textLength="61.26" lengthAdjust="spacingAndGlyphs">Cells edited 0</text>
</svg>
</body></html>
